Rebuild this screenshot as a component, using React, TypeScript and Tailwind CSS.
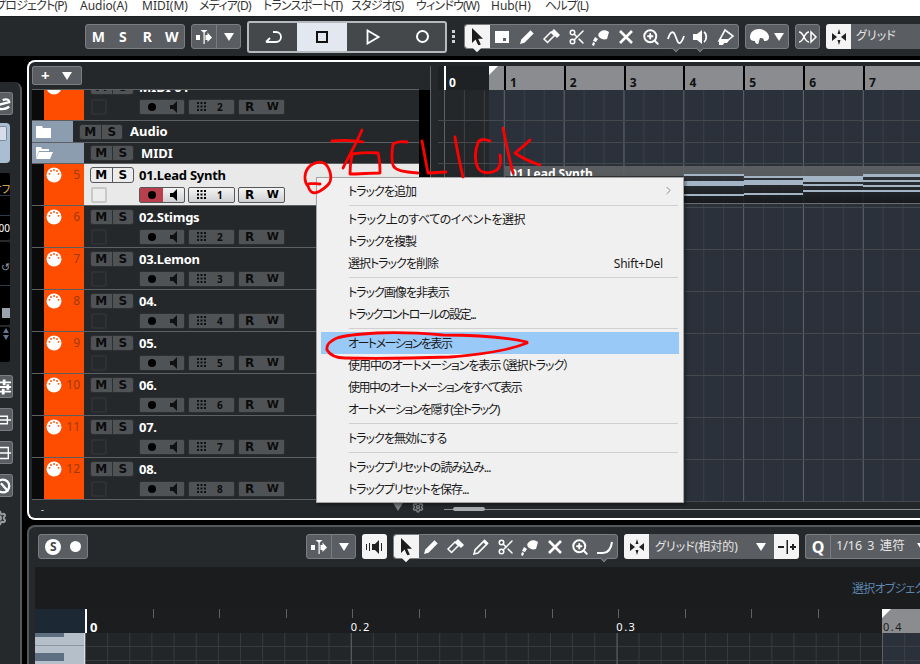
import React from 'react';
import { Scissors, ZoomIn, ChevronRight, Settings } from 'lucide-react';

const menus = [
  { label: 'プロジェクト(P)', cls: 'w-[85px] -ml-[5px] tracking-[-0.8px]' },
  { label: 'Audio(A)', cls: 'w-[62px]' },
  { label: 'MIDI(M)', cls: 'w-[57px]' },
  { label: 'メディア(D)', cls: 'w-[64px] tracking-[-0.8px]' },
  { label: 'トランスポート(T)', cls: 'w-[88px] tracking-[-0.8px]' },
  { label: 'スタジオ(S)', cls: 'w-[65px] tracking-[-0.8px]' },
  { label: 'ウィンドウ(W)', cls: 'w-[75px] tracking-[-0.8px]' },
  { label: 'Hub(H)', cls: 'w-[54px]' },
  { label: 'ヘルプ(L)', cls: 'w-[60px] tracking-[-0.8px]' },
];

const tracks = [
  { no: 5, name: '01.Lead Synth', ch: 1, active: true },
  { no: 6, name: '02.Stimgs', ch: 2 },
  { no: 7, name: '03.Lemon', ch: 3 },
  { no: 8, name: '04.', ch: 4 },
  { no: 9, name: '05.', ch: 5 },
  { no: 10, name: '06.', ch: 6 },
  { no: 11, name: '07.', ch: 7 },
  { no: 12, name: '08.', ch: 8 },
];

const bars = ['1', '2', '3', '4', '5', '6', '7'];

const Svg = ({ children, size = 20 }: { children: React.ReactNode; size?: number }) => (
  <svg width={size} height={size} viewBox="0 0 20 20" fill="currentColor">{children}</svg>
);

const ArrowIcon = () => <Svg><path d="M5 1v15l3.600-3.400 2.600 6 2.600-1.100-2.600-5.800H16z" /></Svg>;
const RangeIcon = () => <Svg><path d="M3 4h14v12H3zM11 11v3h3v-3z" fillRule="evenodd" /></Svg>;
const PencilIcon = () => <Svg><path d="M3 17l1.300-4.500L13.500 3.300l3.200 3.200L7.500 15.700z" /></Svg>;
const LinePencilIcon = () => <Svg><path d="M3 17l1-4L13.500 3.500l3 3L7 16z" fill="none" stroke="currentColor" strokeWidth="1.600" /><path d="M12 5l3 3 2-2-3-3z" /></Svg>;
const EraserIcon = () => <Svg><path d="M2 12l7-7 3.500 3.500-7 7z" fill="none" stroke="currentColor" strokeWidth="1.500" /><path d="M9 5l3-3 6 6-3 3-3.500-3z" /><path d="M5.500 15.500L2 12" stroke="currentColor" /></Svg>;
const GlueIcon = () => <Svg><path d="M8 6c2-3 6-4 10-1l-2 7c-3 1-6 0-8-2-1-2-1-3 0-4zM4 10l3 2-2 3-3-1zM2 15l2 1-1 3-2-1z" /></Svg>;
const CrossIcon = () => <Svg><path d="M4 4l12 12M16 4L4 16" stroke="currentColor" strokeWidth="2.600" fill="none" /></Svg>;
const WaveIcon = () => <Svg><path d="M2 12c2-7 5-9 7-4s3 9 5 8 3-4 4-7" stroke="currentColor" strokeWidth="1.800" fill="none" /></Svg>;
const MuteSpeakerIcon = () => <Svg><path d="M2 7h4l5-4v14l-5-4H2z" /><path d="M13 5c3 2 3 8 0 10" stroke="currentColor" strokeWidth="1.800" fill="none" /></Svg>;
const PaintIcon = () => <Svg><path d="M9 3l8 6-6 5H3z" fill="none" stroke="currentColor" strokeWidth="1.600" /><path d="M3 12h11l-3 4H8l-1 2H3z" /></Svg>;
const CurveIcon = () => <Svg><path d="M2 16h6c5 0 8-4 9-11" stroke="currentColor" strokeWidth="2" fill="none" /></Svg>;

const SnapIcon = () => (
  <svg width="18" height="18" viewBox="0 0 18 18" fill="#222">
    <path d="M9 1l1.500 5h-3zM9 17l-1.500-5h3zM2 5l5 4-5 4zM16 5l-5 4 5 4z" />
  </svg>
);

const PlusMinusIcon = () => (
  <svg width="20" height="16" viewBox="0 0 20 16" fill="#222">
    <path d="M1 7h6v2H1zM9.500 1h1.500v14H9.500zM13 7h2V5h2v2h2v2h-2v2h-2V9h-2z" />
  </svg>
);

const SplitIcon = () => (
  <svg width="16" height="16" viewBox="0 0 16 16" fill="#fff">
    <path d="M0 6h4v5H0zM4.500 1h7L8.700 3.500V15H7.500V3.500zM9.500 6h2V3.500L16 8.500l-4.500 4.500V11h-2z" />
  </svg>
);

const Caret = ({ cls = 'border-t-white' }: { cls?: string }) => (
  <div className={`w-0 h-0 shrink-0 border-x-[5px] border-x-transparent border-t-[8px] ${cls}`} />
);

const Tool = ({ icon, active, notch, cls = '' }: { icon: React.ReactNode; active?: boolean; notch?: boolean; cls?: string }) => (
  <div className={`relative w-[25px] h-full flex items-center justify-center ${active ? 'bg-[#f4f4f4] text-[#1d1d1d]' : 'text-white'} ${cls}`}>
    {icon}
    {notch && <div className={`absolute -bottom-[3px] left-[9px] w-[6px] h-[6px] rotate-45 ${active ? 'bg-[#f4f4f4]' : 'bg-[#5a5d61] border-r border-b border-[#7b7e81]'}`} />}
  </div>
);

const ToolGroup = ({ cls, children }: { cls?: string; children: React.ReactNode }) => (
  <div className={`h-[25px] flex rounded-[3px] border border-[#7b7e81] bg-[#5a5d61] ${cls ?? ''}`}>{children}</div>
);

const MidiIcon = () => (
  <svg width="16" height="16" viewBox="0 0 16 16">
    <circle cx="8" cy="8" r="7.500" fill="#fff" />
    <g fill="#ff4d00">
      <circle cx="3.500" cy="6.800" r="0.900" />
      <circle cx="5" cy="4" r="0.900" />
      <circle cx="8" cy="3" r="0.900" />
      <circle cx="11" cy="4" r="0.900" />
      <circle cx="12.500" cy="6.800" r="0.900" />
    </g>
  </svg>
);

const Dots = ({ color }: { color: string }) => (
  <svg width="9" height="9" viewBox="0 0 9 9" fill={color}>
    {[0, 3.500, 7].map((x) => [0, 3.500, 7].map((y) => <rect key={`${x}-${y}`} x={x} y={y} width="2" height="2" />))}
  </svg>
);

const SmallSpeaker = ({ color }: { color: string }) => (
  <svg width="8" height="12" viewBox="0 0 8 12" fill={color}><path d="M0 4h3l4-4v12L3 8H0z" /></svg>
);

const Controls = ({ ch, active }: { ch: number; active?: boolean }) => {
  const box = active
    ? 'border border-[#55585b] bg-[linear-gradient(#f4f4f4,#cfd0d2)] text-black'
    : 'border border-[#2c2e30] bg-[#505356] text-[#0c0c0c]';
  const ink = active ? '#000' : '#111';
  return (
    <div className="h-[17px] flex items-center mt-[3px]">
      <div className={`ml-[7px] w-[16px] h-[16px] rounded-[2px] border-2 ${active ? 'border-[#c8c8c8] bg-[#ececec]' : 'border-[#2e3134] bg-[#26292c]'}`} />
      <div className={`ml-[32px] w-[46px] h-[16px] rounded-[2px] flex items-center overflow-hidden ${box}`}>
        <div className={`w-[23px] h-full flex items-center justify-center ${active ? 'bg-[#b8404c]' : ''}`}>
          <div className="w-[8px] h-[8px] rounded-full bg-black" />
        </div>
        <div className="flex-1 flex justify-center"><SmallSpeaker color={ink} /></div>
      </div>
      <div className={`ml-[3px] w-[47px] h-[16px] rounded-[2px] flex items-center pl-[8px] gap-[11px] ${box}`}>
        <Dots color={ink} />
        <span className="text-[10px] font-bold leading-none">{ch}</span>
      </div>
      <div className={`ml-[3px] w-[47px] h-[16px] rounded-[2px] flex items-center justify-between pl-[6px] pr-[5px] text-[12px] font-extrabold [font-family:'DejaVu_Sans',sans-serif] leading-none ${box}`}>
        <span>R</span><span className="text-[11px]">W</span>
      </div>
    </div>
  );
};

const MuteSolo = ({ active }: { active?: boolean }) => (
  <div className={`w-[44px] h-[16px] flex rounded-[3px] text-[12px] font-extrabold [font-family:'DejaVu_Sans',sans-serif] leading-none border ${active ? 'bg-[#ececec] border-[#55585b] text-black' : 'bg-[#505356] border-[#2c2e30] text-[#0c0c0c]'}`}>
    <div className={`flex-1 flex items-center justify-center border-r ${active ? 'border-[#55585b]' : 'border-[#2c2e30]'}`}>M</div>
    <div className="flex-1 flex items-center justify-center">S</div>
  </div>
);

const TrackRow = ({ no, name, ch, active }: { no: number; name: string; ch: number; active?: boolean }) => (
  <div className={`h-[42px] flex border-b border-[#5c6063] ${active ? 'bg-[#e9e9e9]' : ''}`}>
    <div className="w-[12px] bg-[#0a0a0a]" />
    <div className="w-[40px] bg-[#ff4d00] relative pt-[3px] pl-[2px] flex justify-between pr-[4px]">
      <MidiIcon />
      <span className="text-[12px] leading-[16px] text-[#9a3b10]">{no}</span>
    </div>
    <div className="flex-1 pt-[3px]">
      <div className="flex items-center h-[16px]">
        <div className="ml-[6px]"><MuteSolo active={active} /></div>
        <span className={`ml-[5px] text-[13px] font-bold leading-none tracking-[-0.25px] ${active ? 'text-black' : 'text-white'}`}>{name}</span>
      </div>
      <Controls ch={ch} active={active} />
    </div>
  </div>
);

const FolderIcon = ({ open }: { open?: boolean }) => (
  <svg width="18" height="14" viewBox="0 0 18 14" fill="#fff">
    {open ? <path d="M1 1h5l1 2h7v2H4L1 12zM4 6h14l-3 7H1z" /> : <path d="M1 1h6l1 2h8v10H1z" />}
  </svg>
);

const FolderRow = ({ label, open, cls, h }: { label: string; open?: boolean; cls: string; h: string }) => (
  <div className={`${h} flex items-center border-b border-[#5c6063]`}>
    <div className={`${cls} h-full bg-[#8c9db0] pl-[3px] flex items-center`}><FolderIcon open={open} /></div>
    <div className="ml-[6px]"><MuteSolo /></div>
    <span className="ml-[7px] text-[13px] font-bold text-white leading-none">{label}</span>
  </div>
);

const SideBtn = ({ children, cls = '' }: { children: React.ReactNode; cls?: string }) => (
  <div className={`w-[13px] h-[23px] bg-[#5a5d61] border border-l-0 border-[#7b7e81] rounded-r-[3px] overflow-hidden flex items-center justify-end text-white ${cls}`}>
    {children}
  </div>
);

const Sidebar = () => (
  <div className="w-[22px] h-full pt-[26px] bg-black">
    <div className="h-full bg-[#26292c] border-r-2 border-[#55585b] rounded-tr-[8px] pt-[10px] flex flex-col overflow-hidden">
      <SideBtn>
        <svg width="13" height="16" viewBox="0 0 13 16" fill="none" stroke="#fff" strokeWidth="2.500"><path d="M-2 9l12-3c0-3-4-4-7-2M-2 13c4 1 8 1 12-2" /></svg>
      </SideBtn>
      <div className="mt-[8px] w-[10px] h-[40px] bg-[#a9bdd3] rounded-r-[4px] pt-[3px]">
        <div className="w-[7px] h-[15px] bg-[#d5dee8] border border-l-0 border-[#7d8a99] rounded-r-[2px]" />
      </div>
      <div className="mt-[10px] w-[10px] h-[67px] bg-black rounded-r-[2px] overflow-hidden flex flex-col">
        <div className="h-[23px] border-b border-[#2d3b4a] flex items-center justify-end text-[10px] leading-none text-[#f0c070] overflow-hidden pt-[10px]">
          <span className="whitespace-nowrap [font-feature-settings:'palt'] shrink-0">オフ</span>
        </div>
        <div className="h-[20px] border-b border-[#2d3b4a]" />
        <div className="flex-1 flex items-center justify-end text-[10px] text-white leading-none overflow-hidden"><span className="shrink-0">000</span></div>
      </div>
      <div className="mt-[2px] w-[10px] h-[83px] bg-black rounded-r-[2px] overflow-hidden flex flex-col">
        <div className="h-[44px] border-b border-[#2d3b4a] flex items-center justify-end pt-[6px] text-[#8f9aa6] text-[11px] leading-none">↺</div>
        <div className="flex-1 flex items-end justify-end pb-[7px]">
          <div className="w-[8px] h-[10px] bg-[#9aa3ad]" />
        </div>
      </div>
      <div className="mt-[2px] w-[10px] h-[35px] bg-black rounded-r-[2px] flex flex-col items-end pt-[1px] gap-[2px] pr-[1px]">
        <div className="w-0 h-0 border-x-[3px] border-x-transparent border-b-[5px] border-b-[#5f7890]" />
        <div className="w-0 h-0 border-x-[3px] border-x-transparent border-t-[5px] border-t-[#5f7890]" />
      </div>
      <SideBtn cls="mt-[13px]">
        <svg width="13" height="16" viewBox="0 0 13 16" fill="#fff"><path d="M0 2h12v2H0zM0 7h12v2H0zM0 12h12v2H0z" /><path d="M3 0h3v6H3zM7 5h3v6H7zM2 10h3v6H2z" /></svg>
      </SideBtn>
      <SideBtn cls="mt-[10px]">
        <svg width="13" height="12" viewBox="0 0 13 12" fill="none" stroke="#fff" strokeWidth="1.500"><path d="M-1 2h9v8h-9zM-1 6h13" /></svg>
      </SideBtn>
      <SideBtn cls="mt-[10px]">
        <svg width="13" height="14" viewBox="0 0 13 14" fill="none" stroke="#fff" strokeWidth="1.500"><path d="M-1 1h10v12h-10zM-1 7h13" /></svg>
      </SideBtn>
      <SideBtn cls="mt-[10px]">
        <svg width="13" height="16" viewBox="0 0 13 16" fill="none" stroke="#fff" strokeWidth="2.500"><circle cx="3" cy="8" r="7" /><path d="M1 5l8 9" /></svg>
      </SideBtn>
      <div className="mt-[13px] -ml-[9px] text-[#9a9da0]"><Settings size={16} strokeWidth={3} /></div>
    </div>
  </div>
);

const TopToolbar = () => (
  <div className="h-[40px] bg-[#26292c] flex items-center pl-[85px] shrink-0 border-t border-[#1d1f21]">
    <div className="w-[100px] h-[25px] flex items-center rounded-[3px] border border-[#7b7e81] bg-[#5a5d61] text-white text-[14px] font-bold leading-none">
      <span className="w-[25px] text-center">M</span>
      <span className="w-[25px] text-center">S</span>
      <span className="w-[25px] text-center">R</span>
      <span className="w-[25px] text-center">W</span>
    </div>
    <ToolGroup cls="ml-[6px] w-[50px]">
      <div className="w-[25px] flex items-center justify-center border-r border-[#7b7e81]"><SplitIcon /></div>
      <div className="flex-1 flex items-center justify-center"><Caret /></div>
    </ToolGroup>
    <div className="ml-[6px] w-[200px] h-[32px] flex rounded-[3px] border-2 border-[#b6babe] bg-[#45484b] overflow-hidden text-white">
      <div className="w-[48px] flex items-center justify-center">
        <svg width="20" height="16" viewBox="0 0 20 16" fill="none" stroke="#fff" strokeWidth="1.800"><path d="M3 13h10a5 5 0 0 0 0-10h-3M3 13l4-4" /></svg>
      </div>
      <div className="w-[50px] bg-[#e3e8f0] flex items-center justify-center">
        <div className="w-[12px] h-[12px] border-[2.5px] border-[#111]" />
      </div>
      <div className="w-[52px] flex items-center justify-center">
        <svg width="14" height="16" viewBox="0 0 14 16" fill="none" stroke="#fff" strokeWidth="1.800"><path d="M1.500 1.500v13L12.500 8z" /></svg>
      </div>
      <div className="flex-1 flex items-center justify-center">
        <div className="w-[13px] h-[13px] rounded-full border-2 border-white" />
      </div>
    </div>
    <div className="ml-[5px] flex flex-col gap-[2px]">
      <div className="w-[3px] h-[3px] bg-[#d0d0d0]" />
      <div className="w-[3px] h-[3px] bg-[#d0d0d0]" />
      <div className="w-[3px] h-[3px] bg-[#d0d0d0]" />
    </div>
    <ToolGroup cls="ml-[9px] w-[275px]">
      <Tool icon={<ArrowIcon />} active notch cls="rounded-l-[3px]" />
      <Tool icon={<RangeIcon />} />
      <Tool icon={<PencilIcon />} />
      <Tool icon={<EraserIcon />} />
      <Tool icon={<Scissors size={18} strokeWidth={2} />} />
      <Tool icon={<GlueIcon />} />
      <Tool icon={<CrossIcon />} />
      <Tool icon={<ZoomIn size={18} strokeWidth={2.600} />} />
      <Tool icon={<WaveIcon />} notch />
      <Tool icon={<MuteSpeakerIcon />} notch />
      <Tool icon={<PaintIcon />} />
    </ToolGroup>
    <ToolGroup cls="ml-[6px] w-[44px] items-center pl-[3px] gap-[4px] text-white">
      <svg width="21" height="18" viewBox="0 0 21 18" fill="#fff"><path d="M1 9c0-5 4-8 9-8s10 4 10 8-3 4-5 4c0-3-2-3-4-3-1 2-1 5-2 6-2 0-3-1-3-3-3 0-5-1-5-4z" /></svg>
      <Caret />
    </ToolGroup>
    <ToolGroup cls="ml-[6px] w-[25px] items-center justify-center text-white">
      <svg width="20" height="16" viewBox="0 0 20 16" fill="none" stroke="#fff" strokeWidth="1.500"><path d="M1 3c5 0 5 10 10 10M1 13c5 0 5-10 10-10M13 3l5 5-5 5z" /></svg>
    </ToolGroup>
    <div className="ml-[6px] flex-1 h-[25px] flex overflow-hidden rounded-l-[3px]">
      <div className="w-[25px] bg-[#f4f4f4] flex items-center justify-center"><SnapIcon /></div>
      <div className="flex-1 bg-[#5a5d61] pl-[5px] text-[12px] leading-[24px] text-[#e5e5e5] [font-feature-settings:'palt'] whitespace-nowrap">グリッド</div>
    </div>
  </div>
);

const Ruler = () => (
  <div className="h-[24px] ml-[7px] flex">
    <div className="w-[51px] shrink-0 bg-[#1f2225] pl-[6px] flex">
      <div className="w-[2px] bg-white mr-[3px]" />
      <span className="text-[12px] font-bold text-white leading-[34px]">0</span>
    </div>
    <div className="flex-1 min-w-0 bg-[#8a8c8f] relative flex pl-[15px] overflow-hidden">
      <div className="absolute left-0 top-0 w-0 h-0 border-t-[9px] border-r-[9px] border-t-white border-r-transparent" />
      {bars.map((b) => (
        <div key={b} className="w-[59.830px] shrink-0 border-l-2 border-black pl-[4px] text-[12px] font-bold leading-[34px] text-[#111]">{b}</div>
      ))}
    </div>
  </div>
);

const gridCls =
  "bg-[linear-gradient(90deg,#5d6165_1px,transparent_1px),linear-gradient(90deg,#3b3f45_1px,transparent_1px),linear-gradient(90deg,#24272a_51px,#2a313a_51px)] [background-size:59.830px_100%,19.943px_100%,100%_100%] [background-position:6px_0,6px_0,0_0]";

const noteCls = 'bg-[#a3b4c4]';

const LeadSynthEvent = () => (
  <div className="h-[38px] mt-[2px] ml-[67px] bg-[linear-gradient(rgba(60,63,66,0.75),rgba(20,22,24,0.85))] border-b border-[#6a6d70] overflow-hidden">
    <div className="h-[10px] bg-[rgba(120,123,126,0.55)] pl-[5px] text-[12px] font-bold leading-[16px] text-white whitespace-nowrap overflow-hidden">01 Lead Synth</div>
    <div className="flex h-[28px] ml-[179px]">
      <div className="w-[60px]">
        <div className={`h-[2px] -mt-[2px] ${noteCls}`} />
        <div className={`h-[5px] mt-[5px] ${noteCls}`} />
        <div className={`h-[2px] mt-[8px] ${noteCls}`} />
      </div>
      <div className="w-[59px]">
        <div className={`h-[2px] ${noteCls}`} />
        <div className={`h-[5px] mt-[2px] ${noteCls}`} />
        <div className={`h-[2px] mt-[8px] ${noteCls}`} />
      </div>
      <div className="w-[60px]">
        <div className={`h-[6px] ${noteCls}`} />
        <div className={`h-[2px] mt-[2px] ${noteCls}`} />
        <div className={`h-[2px] mt-[4px] ${noteCls}`} />
      </div>
      <div className="flex-1">
        <div className={`h-[3px] -mt-[2px] ${noteCls}`} />
        <div className={`h-[2px] mt-[3px] ${noteCls}`} />
        <div className={`h-[2px] mt-[3px] ${noteCls}`} />
        <div className={`h-[2px] mt-[3px] ${noteCls}`} />
      </div>
    </div>
  </div>
);

const Arrange = () => (
  <div className={`ml-[7px] ${gridCls} flex-1`}>
    <div className="h-[31px] border-b border-[#45494d]" />
    <div className="h-[22px] border-b border-[#45494d]" />
    <div className="h-[21px] border-b border-[#45494d]" />
    {tracks.map((t) => (
      <div key={t.no} className="h-[42px] border-b border-[#45494d]">
        {t.active && <LeadSynthEvent />}
      </div>
    ))}
  </div>
);

const ProjectPanel = () => (
  <div className="h-[460px] border-2 border-r-0 border-white rounded-l-[8px] bg-[#25282b] flex flex-col">
    <div className="mt-[4px] ml-[3px] h-[434px] flex">
      <div className="w-[387px] shrink-0 flex flex-col">
        <div className="h-[24px] border-b border-[#5c6063]">
          <div className="w-[50px] h-[19px] rounded-[2px] border border-[#7b7e81] bg-[#5a5d61] flex items-center justify-around pl-[2px] pr-[3px] text-white">
            <span className="text-[15px] font-bold leading-none -mt-px">+</span>
            <Caret />
          </div>
        </div>
        <div className="h-[31px] flex border-b border-[#5c6063] overflow-hidden">
          <div className="w-[12px] bg-[#0a0a0a]" />
          <div className="w-[40px] bg-[#ff4d00] pl-[2px] -mt-[11px]"><MidiIcon /></div>
          <div className="flex-1 -mt-[11px]">
            <div className="flex items-center h-[16px]">
              <div className="ml-[6px]"><MuteSolo /></div>
              <span className="ml-[5px] text-[13px] font-bold text-white leading-none">MIDI 01</span>
            </div>
            <Controls ch={2} />
          </div>
        </div>
        <FolderRow label="Audio" h="h-[22px]" cls="w-[41px]" />
        <FolderRow label="MIDI" open h="h-[21px]" cls="w-[52px]" />
        {tracks.map((t) => <TrackRow key={t.no} {...t} />)}
      </div>
      <div className="w-[11px] shrink-0 mt-[24px] bg-black" />
      <div className="flex-1 min-w-0 border-l border-[#606468] flex flex-col">
        <Ruler />
        <Arrange />
      </div>
    </div>
    <div className="flex-1 flex items-center">
      <span className="ml-[12px] text-white text-[9px] leading-none w-[352px]">-</span>
      <div className="-mt-[5px]"><Caret cls="border-t-[#7b7e81]" /></div>
      <div className="ml-[9px] -mt-[5px] text-[#7b7e81]"><Settings size={12} strokeWidth={3} /></div>
      <div className="ml-[20px] flex-1 h-px bg-[#8a8c8f] relative">
        <div className="absolute left-[9px] -top-[2px] w-[32px] h-[4px] rounded-full bg-[#a8aaad]" />
      </div>
    </div>
  </div>
);

const LowerToolbar = () => (
  <div className="h-[25px] flex ml-[9px] shrink-0">
    <ToolGroup cls="w-[50px] items-center justify-around px-[2px]">
      <div className="w-[16px] h-[16px] rounded-full bg-white flex items-center justify-center text-[12px] font-bold leading-none text-[#44474a]">S</div>
      <div className="w-[11px] h-[11px] rounded-full bg-white" />
    </ToolGroup>
    <ToolGroup cls="ml-[218px] w-[50px]">
      <div className="w-[25px] flex items-center justify-center border-r border-[#7b7e81]"><SplitIcon /></div>
      <div className="flex-1 flex items-center justify-center"><Caret /></div>
    </ToolGroup>
    <div className="ml-[6px] w-[25px] h-[25px] rounded-[3px] bg-[#f4f4f4] flex items-center justify-center">
      <svg width="20" height="14" viewBox="0 0 20 14" fill="#222"><path d="M7 4h3l4-4v14l-4-4H7zM1 4h1v6H1zM4 3h1v8H4zM16 3h1v8h-1z" /></svg>
    </div>
    <ToolGroup cls="ml-[6px] w-[225px]">
      <Tool icon={<ArrowIcon />} active notch cls="rounded-l-[3px]" />
      <Tool icon={<PencilIcon />} />
      <Tool icon={<EraserIcon />} />
      <Tool icon={<LinePencilIcon />} />
      <Tool icon={<Scissors size={18} strokeWidth={2} />} />
      <Tool icon={<GlueIcon />} />
      <Tool icon={<CrossIcon />} />
      <Tool icon={<ZoomIn size={18} strokeWidth={2.600} />} />
      <Tool icon={<CurveIcon />} notch />
    </ToolGroup>
    <div className="ml-[6px] h-[25px] w-[175px] flex rounded-[3px] overflow-hidden">
      <div className="w-[25px] bg-[#f4f4f4] flex items-center justify-center"><SnapIcon /></div>
      <div className="flex-1 bg-[#5a5d61] flex items-center justify-between pl-[6px] pr-[8px]">
        <span className="text-[12px] leading-none text-[#e5e5e5] [font-feature-settings:'palt'] whitespace-nowrap">グリッド(相対的)</span>
        <Caret />
      </div>
      <div className="w-[25px] bg-[#f4f4f4] flex items-center justify-center"><PlusMinusIcon /></div>
    </div>
    <div className="ml-[6px] flex-1 h-[25px] flex items-center rounded-l-[3px] border border-r-0 border-[#7b7e81] bg-[#5a5d61] overflow-hidden">
      <div className="w-[25px] h-full shrink-0 flex items-center justify-center border-r border-[#7b7e81] text-white text-[16px] font-bold leading-none">Q</div>
      <span className="pl-[5px] w-[86px] shrink-0 text-[12.5px] leading-none text-[#e5e5e5] whitespace-nowrap [word-spacing:2px]">1/16 3 連符</span>
      <Caret />
    </div>
  </div>
);

const tickCls = 'w-[66.500px] shrink-0 h-[9px] border-l border-[#5d6165]';

const LowerEditor = () => (
  <div className="flex-1 flex flex-col ml-[6px] overflow-hidden mt-[8px]">
    <div className="h-[42px] bg-[#1a1c1e] flex items-center justify-start shrink-0 pl-[817px] overflow-hidden">
      <span className="text-[12px] leading-none text-[#5f86ae] whitespace-nowrap [font-feature-settings:'palt'] tracking-[-0.8px] mt-[1px]">選択オブジェクト</span>
    </div>
    <div className="h-[24px] flex shrink-0">
      <div className="w-[50px] bg-[#1c2833]" />
      <div className="w-[797px] bg-[#1b1d1f] border-l-2 border-white">
        <div className="flex">
          {[0, 1, 2, 3, 4, 5, 6, 7, 8, 9, 10, 11].map((n) => (
            <div key={n} className={n === 0 ? 'w-[65.500px] shrink-0 h-[9px]' : tickCls} />
          ))}
        </div>
        <div className="flex text-[11px] leading-none text-white pt-[3px]">
          <span className="w-[264px] pl-[3px] text-[13px] font-bold">0</span>
          <span className="w-[266px] tracking-[1.500px]">0.2</span>
          <span className="w-[266px] tracking-[1.500px]">0.3</span>
        </div>
      </div>
      <div className="flex-1 bg-[#8a8c8f] relative pt-[12px] text-[11px] leading-none text-[#1c1c1c] tracking-[1.500px] pl-[1px]">
        <div className="absolute left-0 top-0 w-0 h-0 border-t-[9px] border-r-[9px] border-t-white border-r-transparent" />
        0.4
      </div>
    </div>
    <div className="flex-1 flex">
      <div className="w-[50px] bg-[#b5bfc9] flex flex-col border-r border-[#dadfe4]">
        <div className="h-[4px] w-[29px] bg-[#5f6f82]" />
        <div className="h-[9px] border-b border-[#8d98a5]" />
        <div className="h-[8px] w-[29px] bg-[#5f6f82] mt-[7px]" />
      </div>
      <div className="w-[797px] bg-[linear-gradient(90deg,#5d6165_1px,transparent_1px),linear-gradient(90deg,#383b3e_1px,transparent_1px),linear-gradient(#383b3e_1px,transparent_1px)] [background-size:265.800px_100%,22.150px_100%,100%_14px] bg-[#232629] [background-position:0_0,0_0,0_13px]" />
      <div className="flex-1 bg-[linear-gradient(90deg,#5d6165_1px,transparent_1px),linear-gradient(90deg,#3b3f45_1px,transparent_1px),linear-gradient(#3b3f45_1px,transparent_1px)] [background-size:38px_100%,22.150px_100%,100%_14px] bg-[#2a313a] [background-position:0_0,0_0,0_13px]" />
    </div>
  </div>
);

const MenuItem = ({ label, right, hi, cls = 'tracking-[-1px]' }: { label: string; right?: string; hi?: boolean; cls?: string }) => (
  <div className={`h-[22px] mx-[4px] pl-[27px] pr-[16px] flex items-center justify-between ${hi ? 'bg-[#99c9f7]' : ''}`}>
    <span className={`[font-feature-settings:'palt'] whitespace-nowrap mt-[1px] ${cls}`}>{label}</span>
    {right && <span className="mt-[1px] tracking-[-0.2px]">{right}</span>}
  </div>
);

const Sep = ({ h }: { h: string }) => (
  <div className={`${h} flex items-center ml-[32px] mr-[5px]`}><div className="w-full h-px bg-[#d0d0d0]" /></div>
);

const ContextMenu = () => (
  <div className="absolute left-[316px] top-[177px] w-[368px] h-[326px] bg-[#f0f0f0] border border-[#a4a4a4] pt-[2px] text-[12px] text-[#1a1a1a] leading-none shadow-[2px_2px_3px_rgba(0,0,0,0.4)]">
    <MenuItem label="トラックを追加" />
    <div className="relative"><div className="absolute right-[8px] -top-[18px]"><ChevronRight size={13} strokeWidth={1.500} className="text-[#777]" /></div></div>
    <Sep h="h-[6px]" />
    <MenuItem label="トラック上のすべてのイベントを選択" cls="tracking-[-0.5px]" />
    <MenuItem label="トラックを複製" />
    <MenuItem label="選択トラックを削除" right="Shift+Del" />
    <Sep h="h-[7px]" />
    <MenuItem label="トラック画像を非表示" />
    <MenuItem label="トラックコントロールの設定..." cls="tracking-[-1.500px]" />
    <Sep h="h-[7px]" />
    <MenuItem label="オートメーションを表示" hi cls="tracking-[-1.500px]" />
    <MenuItem label="使用中のオートメーションを表示（選択トラック）" />
    <MenuItem label="使用中のオートメーションをすべて表示" cls="tracking-[-1.500px]" />
    <MenuItem label="オートメーションを隠す(全トラック)" cls="tracking-[-1.500px]" />
    <Sep h="h-[7px]" />
    <MenuItem label="トラックを無効にする" />
    <Sep h="h-[7px]" />
    <MenuItem label="トラックプリセットの読み込み..." />
    <MenuItem label="トラックプリセットを保存..." />
  </div>
);

const Scribbles = () => (
  <svg className="absolute left-0 top-0 pointer-events-none" width="920" height="664" fill="none" stroke="#f00" strokeWidth="2.800" strokeLinecap="round" strokeLinejoin="round">
    <path d="M307 185C303 178 305 168 313 164S327 162 330 172 328 186 320 191 309 190 308 186 314 184 320 184" />
    <path d="M332 141C342 140 353 140 363 142M362 130C356 144 349 156 343 168M351 154C360 153 370 152 378 153 380 160 380 167 380 173 370 173 360 174 350 174 350 168 351 160 352 155" />
    <path d="M407 142C401 141 396 142 393 144 392 150 391 158 393 165 395 171 405 172 418 173" />
    <path d="M422 141C424 152 426 163 428 173 434 173 440 172 446 172" />
    <path d="M455 137C457 150 460 164 463 177" />
    <path d="M490 141C484 139 479 139 478 143 475 150 474 160 478 168 482 174 490 174 497 170 501 166 501 160 500 155" />
    <path d="M503 128C506 143 509 158 513 173M530 140C525 145 520 149 515 153 522 158 531 162 540 165" />
    <path d="M527 342C500 336 470 335 443 335 420 333 397 332 377 333 360 334 346 335 337 338 330 341 326 345 327 350 330 355 335 358 345 358 380 359 420 358 450 357 475 355 505 352 527 343" />
  </svg>
);

export default function App() {
  return (
    <div className="relative w-[920px] h-[664px] overflow-hidden bg-black flex flex-col [font-family:'Noto_Sans','Noto_Sans_CJK_JP',sans-serif]">
      <div className="h-[16px] bg-white flex overflow-hidden shrink-0 text-[12px] text-[#333] leading-[12px]">
        {menus.map((m) => (
          <div key={m.label} className={`${m.cls} shrink-0 whitespace-nowrap [font-feature-settings:'palt']`}>{m.label}</div>
        ))}
      </div>
      <TopToolbar />
      <div className="flex-1 flex min-h-0">
        <Sidebar />
        <div className="ml-[5px] flex-1 min-w-0 pt-[4px] flex flex-col">
          <ProjectPanel />
          <div className="mt-[5px] flex-1 min-h-0 bg-[#26292c] border-t-2 border-l-2 border-[#55585b] rounded-tl-[8px] pt-[7px] flex flex-col">
            <LowerToolbar />
            <LowerEditor />
          </div>
        </div>
      </div>
      <ContextMenu />
      <Scribbles />
    </div>
  );
}
